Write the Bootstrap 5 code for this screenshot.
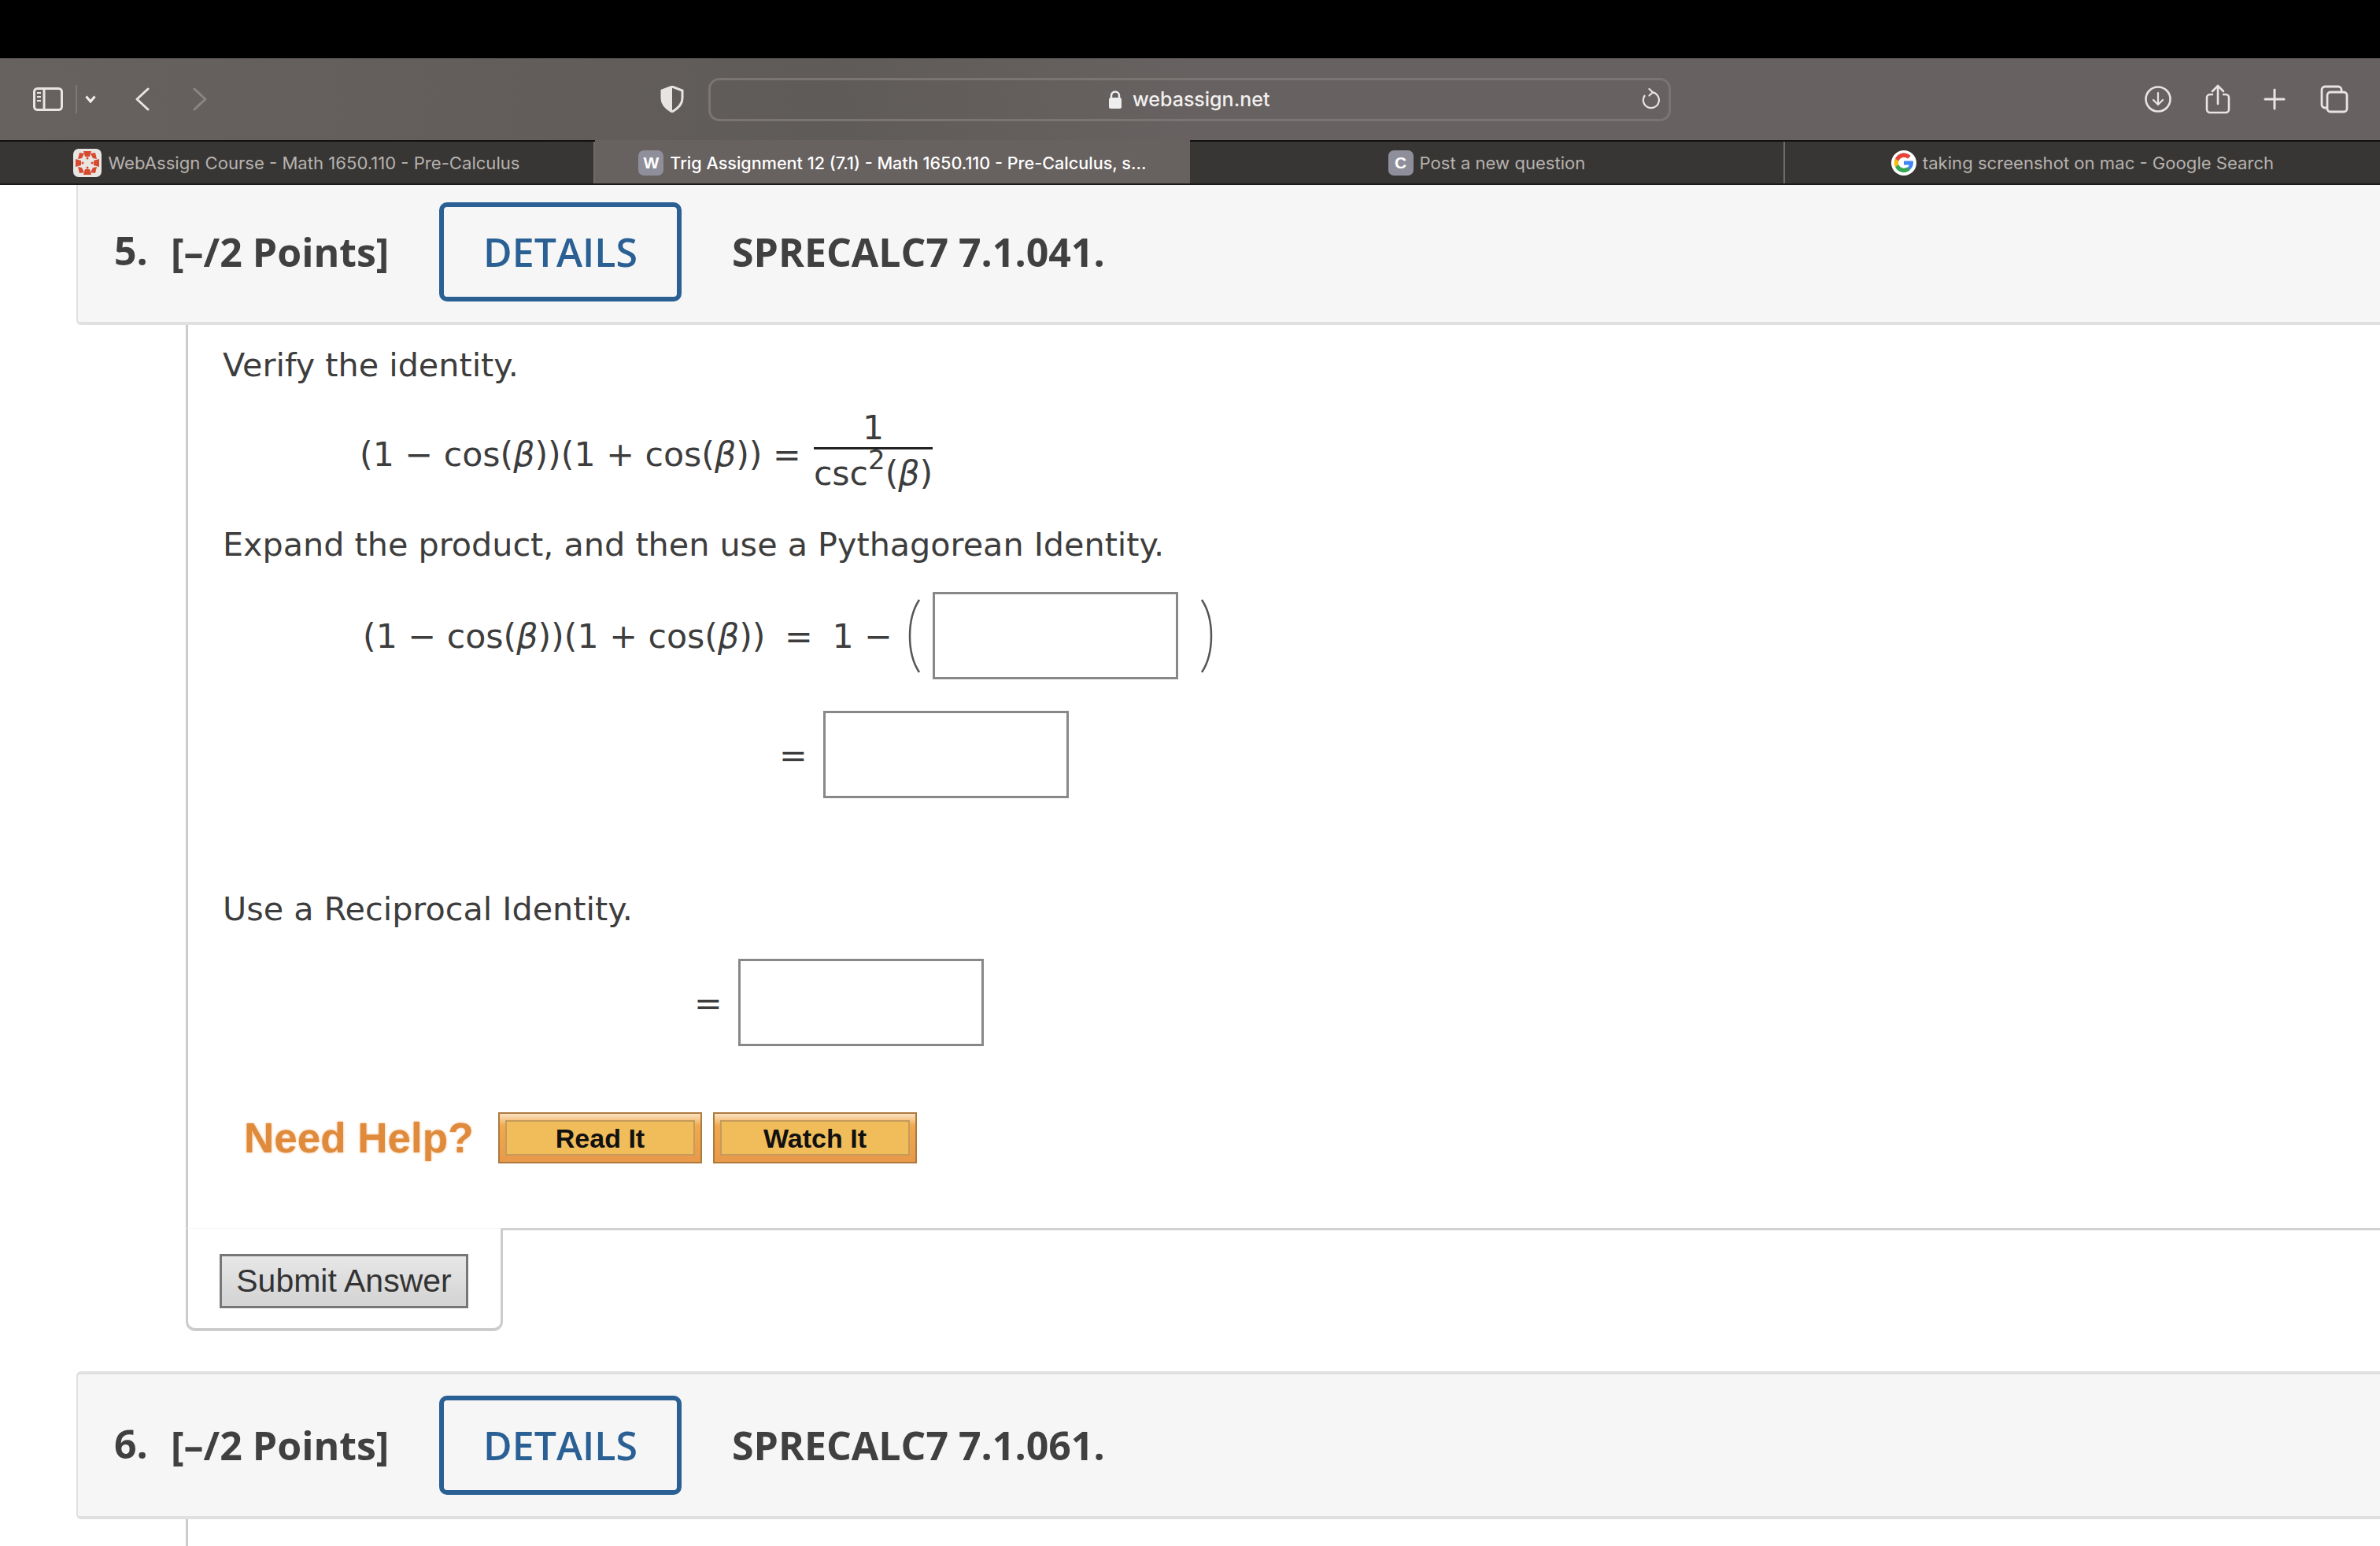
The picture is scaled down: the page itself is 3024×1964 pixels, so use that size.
<!DOCTYPE html>
<html lang="en"><head><meta charset="utf-8"><title>Trig Assignment</title>
<link href="https://cdn.jsdelivr.net/npm/bootstrap@5.3.0/dist/css/bootstrap.min.css" rel="stylesheet">
<style>
html,body{margin:0;background:#fff}
.pg{width:3024px;height:1964px;overflow:hidden;background:#fff}
.blk{height:74px;background:#000}
.tbar{height:104px;background:linear-gradient(90deg,#676260 0,#5f5b58 35%,#676261 50%,#676261 100%);padding-left:42px;color:#e8e4e3}
.tbar svg{display:block;flex:none}
.urlb{width:1223px;height:55px;margin-left:31px;border:3px solid #7a7573;border-radius:14px;padding-right:11px;color:#f2f0ef;font:500 25px Inter,"Liberation Sans",sans-serif}
.urlin{gap:13px;padding-left:505px;flex:1}
.tabsr{height:57px;border-top:2px solid #111;border-bottom:2px solid #1c1b1a;background:#383634}
.tabx{width:25%;color:#b6b2af;font:400 22.1px Inter,"Liberation Sans",sans-serif;gap:8px;border-right:2px solid #6f6b69;white-space:nowrap}
.tabx:last-child{border-right:0}
.tabx.on{background:#67615f;color:#fff;font-weight:500;font-size:21.6px;margin-top:-2px;padding-top:2px;border-right:0}
.fav{width:32px;height:32px;border-radius:7px;background:#8f8f9b;color:#fff;font:700 21px "Liberation Sans",sans-serif}
.qhead{margin-left:97px;height:178px;padding-bottom:4px;background:#f6f6f6;border:2px solid #e0e0e0;border-right:0;border-top:0;border-bottom-width:4px;border-radius:0 0 0 6px;color:#404040;font-family:"Open Sans",sans-serif;font-weight:700}
.qhead.sec{height:188px;padding-bottom:0;border-top:4px solid #e0e0e0;border-radius:6px 0 0 6px}
.qnum{font-size:50px;margin-left:46px;width:72px;margin-top:-4px}
.qpts{font-size:50px;width:341px;font-weight:700}
.qdet{width:308px;height:126px;border:6px solid #2a6094;border-radius:10px;color:#2a6094;font:600 50px "Open Sans",sans-serif;background:transparent;padding:0}
.qid{font-size:50px;margin-left:64px}
.qup{margin-left:236px;border-left:3px solid #ccc;font:400 41.3px "DejaVu Sans",sans-serif;color:#3d3d3d}
.qtxt{padding-left:44px}
.t1{padding-top:24px;line-height:54px}
.mth{font-size:42.7px}
.mln{line-height:54px;white-space:pre}
.bet{font-style:italic}
.eqm{margin:0 11px}
.fr{margin-left:16px;line-height:1}
.frn{border-bottom:3px solid #222;padding:0 8px;line-height:48px;height:52px;text-align:center}
.frd{line-height:60px;height:64px;text-align:center}
.frd sup{font-size:34px;top:-.6em;line-height:0}
.answ{width:312px;height:111px;border:3px solid #888;border-radius:0;padding:0;background:#fff;flex:none}
.answ:focus{box-shadow:none;border-color:#888}
.hlp{padding-left:71px;height:65px;margin-top:84px}
.hlpt{font:700 53px "Liberation Sans",sans-serif;color:#e08a3c;text-shadow:0 0 3px #eeb27a;width:323px}
.hbtn{width:259px;height:65px;padding:8px 7px 8px;border:2px solid #ad7a3e;border-radius:0;background:linear-gradient(#fbe3c3 0,#f0a94f 25%,#e8994a 100%);margin-right:14px}
.hbtn span{display:block;height:100%;background:#f1bd5b;border:2px solid #c49b5b;color:#111;font:700 34px/42px "Liberation Sans",sans-serif;text-align:center;white-space:nowrap}
.qfoot{margin-left:236px;padding-top:82px;border-left:3px solid #ccc;height:82px}
.qlow{margin-left:236px}
.qsub{width:403px;height:131px;padding:32px 0 0 40px;border:3px solid #ccc;border-top:1px solid #f6f6f6;border-bottom-width:4px;border-radius:0 0 12px 12px}
.qrest{flex:1;border-top:3px solid #d2d2d2}
.sbtn{width:316px;height:69px;padding:0;border:3px solid #777;border-radius:0;background:linear-gradient(#e7e7e7,#d3d3d3);color:#333;font:400 41px "Liberation Sans",sans-serif}
</style></head><body>
<div class="pg">
<div class="blk"></div>
<div class="tbar d-flex align-items-center">
<svg width="38" height="30" viewBox="0 0 38 30" fill="none" stroke="#e8e4e3" stroke-width="3"><rect x="1.500" y="1.500" width="35" height="27" rx="4"/><path d="M14 2v26"/><path d="M5 7h5M5 12h5M5 17h5" stroke-width="2.200"/></svg>
<svg class="ms-3" width="2" height="36"><rect width="2" height="36" fill="#7d7876"/></svg>
<svg style="margin-left:10px" width="14" height="10" viewBox="0 0 14 10" fill="none" stroke="#f2efee" stroke-width="3"><path d="M1.500 1.500 7 8l5.500-6.500"/></svg>
<svg style="margin-left:49px" width="20" height="30" viewBox="0 0 20 30" fill="none" stroke="#e8e4e3" stroke-width="3" stroke-linecap="round" stroke-linejoin="round"><path d="M17 2 3 15l14 13"/></svg>
<svg style="margin-left:53px" width="20" height="30" viewBox="0 0 20 30" fill="none" stroke="#8a8583" stroke-width="3" stroke-linecap="round" stroke-linejoin="round"><path d="m3 2 14 13L3 28"/></svg>
<svg style="margin-left:575px" width="30" height="34" viewBox="0 0 30 34"><path d="M15 1 28 6v10c0 8-6 13-13 17C8 29 2 24 2 16V6z" fill="none" stroke="#e8e4e3" stroke-width="3"/><path d="M15 1 2 6v10c0 8 6 13 13 17z" fill="#e8e4e3"/></svg>
<div class="urlb d-flex align-items-center">
<div class="urlin d-flex align-items-center"><svg width="18" height="23" viewBox="0 0 18 23"><path d="M4 10V6.500a5 5 0 0 1 10 0V10" fill="none" stroke="#eee" stroke-width="2.500"/><rect x="1" y="9" width="16" height="14" rx="2.500" fill="#eee"/></svg><span>webassign.net</span></div>
<svg width="24" height="28" viewBox="0 0 24 28" fill="none" stroke="#e8e4e3" stroke-width="2.200"><path d="M14 5.200A10 10 0 1 1 5 9"/><path d="M10.500 1 15 5.200 10.500 9.500" stroke-linecap="round" stroke-linejoin="round"/></svg>
</div>
<svg style="margin-left:602px" width="34" height="34" viewBox="0 0 34 34" fill="none" stroke="#e8e4e3" stroke-width="2.600"><circle cx="17" cy="17" r="15.500"/><path d="M17 9v15M11 18l6 6 6-6" stroke-linecap="round" stroke-linejoin="round" stroke-width="2.200"/></svg>
<svg style="margin-left:43px" width="32" height="38" viewBox="0 0 32 38" fill="none" stroke="#e8e4e3" stroke-width="2.600"><path d="M10 13H6a4 4 0 0 0-4 4v15a4 4 0 0 0 4 4h20a4 4 0 0 0 4-4V17a4 4 0 0 0-4-4h-4"/><path d="M16 25V2M9 9l7-7 7 7" stroke-linecap="round" stroke-linejoin="round"/></svg>
<svg style="margin-left:42px" width="28" height="28" viewBox="0 0 28 28" stroke="#e8e4e3" stroke-width="3" stroke-linecap="round"><path d="M14 2v24M2 14h24"/></svg>
<svg style="margin-left:44px" width="36" height="36" viewBox="0 0 36 36" fill="none" stroke="#e8e4e3" stroke-width="2.800"><path d="M8 29H6a4 4 0 0 1-4-4V6a4 4 0 0 1 4-4h17a4 4 0 0 1 4 4v3"/><rect x="9" y="9" width="25" height="25" rx="4"/></svg>
</div>
<div class="tabsr d-flex">
<div class="tabx d-flex align-items-center justify-content-center"><svg width="36" height="36" viewBox="0 0 36 36"><rect width="36" height="36" rx="7" fill="#e9e5e3"/><g fill="#d64a2f"><path d="M13 3h10l-2 7h-6zM13 33h10l-2-7h-6zM3 13v10l7-2v-6zM33 13v10l-7-2v-6zM8 5l6 1-3 6-5 1zM28 5l-6 1 3 6 5 1zM8 31l6-1-3-6-5-1zM28 31l-6-1 3-6 5-1z"/><circle cx="18" cy="12" r="1.500"/><circle cx="18" cy="24" r="1.500"/><circle cx="12" cy="18" r="1.500"/><circle cx="24" cy="18" r="1.500"/></g></svg><span>WebAssign Course - Math 1650.110 - Pre-Calculus</span></div>
<div class="tabx on d-flex align-items-center justify-content-center"><span class="fav d-flex align-items-center justify-content-center">W</span><span>Trig Assignment 12 (7.1) - Math 1650.110 - Pre-Calculus, s...</span></div>
<div class="tabx d-flex align-items-center justify-content-center"><span class="fav d-flex align-items-center justify-content-center">C</span><span>Post a new question</span></div>
<div class="tabx d-flex align-items-center justify-content-center"><svg width="32" height="32" viewBox="0 0 32 32"><circle cx="16" cy="16" r="16" fill="#fff"/><path d="M16 13.500v5h7a7.500 7.500 0 1 1-2-8l3.500-3.500A12 12 0 1 0 28 16c0-1-.1-1.800-.3-2.500z" fill="#4285f4"/><path d="M5.200 10.500 9.300 13.700A7.500 7.500 0 0 1 21 10.500l3.500-3.500A12 12 0 0 0 5.200 10.500z" fill="#ea4335"/><path d="M5.200 10.500a12 12 0 0 0 0 11l4.100-3.200a7.500 7.500 0 0 1 0-4.600z" fill="#fbbc05"/><path d="M5.200 21.500A12 12 0 0 0 24 24.700l-4-3.100a7.500 7.500 0 0 1-10.700-3.300z" fill="#34a853"/></svg><span>taking screenshot on mac - Google Search</span></div>
</div>
<div class="qhead d-flex align-items-center"><span class="qnum">5.</span><span class="qpts">[–/2 Points]</span><button class="qdet btn" type="button">DETAILS</button><span class="qid">SPRECALC7 7.1.041.</span></div>
<div class="qup">
<div class="qtxt t1">Verify the identity.</div>
<div class="mth d-flex align-items-center" style="padding-left:218px;margin-top:28px"><span class="mln">(1 − cos(<span class="bet">β</span>))(1 + cos(<span class="bet">β</span>)) =</span><div class="fr"><div class="frn">1</div><div class="frd">csc<sup>2</sup>(<span class="bet">β</span>)</div></div></div>
<div class="qtxt" style="margin-top:30px;line-height:54px">Expand the product, and then use a Pythagorean Identity.</div>
<div class="mth d-flex align-items-center" style="padding-left:222px;margin-top:33px"><span class="mln">(1 − cos(<span class="bet">β</span>))(1 + cos(<span class="bet">β</span>)) <span class="eqm">=</span> 1 −</span>
<svg style="margin-left:14px" width="22" height="96" viewBox="0 0 22 96" fill="none" stroke="#555" stroke-width="2.500"><path d="M20 2C4 26 4 70 20 94"/></svg>
<input class="form-control answ" style="margin-left:15px" type="text" aria-label="answer">
<svg style="margin-left:28px" width="22" height="96" viewBox="0 0 22 96" fill="none" stroke="#555" stroke-width="2.500"><path d="M2 2c16 24 16 68 0 92"/></svg></div>
<div class="mth d-flex align-items-center" style="padding-left:751px;margin-top:40px"><span class="mln">=</span><input class="form-control answ" style="margin-left:20px" type="text" aria-label="answer"></div>
<div class="qtxt" style="margin-top:114px;line-height:54px">Use a Reciprocal Identity.</div>
<div class="mth d-flex align-items-center" style="padding-left:643px;margin-top:36px"><span class="mln">=</span><input class="form-control answ" style="margin-left:20px" type="text" aria-label="answer"></div>
<div class="hlp d-flex align-items-center"><span class="hlpt">Need Help?</span><button class="hbtn btn" type="button"><span>Read It</span></button><button class="hbtn btn" type="button"><span>Watch It</span></button></div>
<div style="height:82px"></div>
</div>
<div class="qlow d-flex"><div class="qsub"><button class="sbtn btn" type="button">Submit Answer</button></div><div class="qrest"></div></div>
<div class="qhead sec d-flex align-items-center" style="margin-top:51px"><span class="qnum">6.</span><span class="qpts">[–/2 Points]</span><button class="qdet btn" type="button">DETAILS</button><span class="qid">SPRECALC7 7.1.061.</span></div>
<div class="qup"><div class="qtxt t1">Verify the identity.</div></div>
</div>
<script src="https://cdn.jsdelivr.net/npm/bootstrap@5.3.0/dist/js/bootstrap.bundle.min.js"></script>
</body></html>
